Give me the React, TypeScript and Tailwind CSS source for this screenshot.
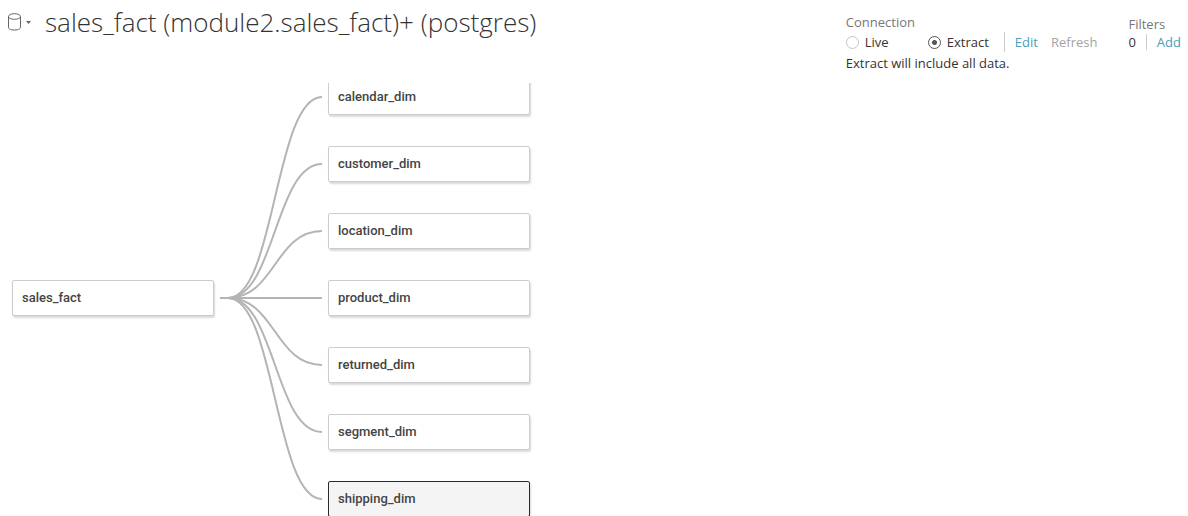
import { useState } from "react";

const ROW_STEP = 67;
const NODE_CENTER = 14;
const FACT_ROW = 3;

const dimensions = [
  "calendar_dim",
  "customer_dim",
  "location_dim",
  "product_dim",
  "returned_dim",
  "segment_dim",
  "shipping_dim",
];

function centerOf(row: number) {
  return NODE_CENTER + row * ROW_STEP;
}

function edgePath(row: number) {
  const from = centerOf(FACT_ROW);
  const to = centerOf(row);
  return `M220 ${from}H228C275 ${from} 275 ${to} 322 ${to}`;
}

type NodeProps = {
  name: string;
  left: number;
  row: number;
  selected: boolean;
  onSelect: () => void;
};

function TableNode({ name, left, row, selected, onSelect }: NodeProps) {
  const look = selected
    ? "border-[#2a2a2a] bg-[#f4f4f4]"
    : "border-[#cccccc] bg-white";
  return (
    <button
      type="button"
      onClick={onSelect}
      style={{ left, top: centerOf(row) - 18 }}
      className={`absolute flex h-9 w-[202px] items-center rounded-[2px] border pl-[9px] text-left font-[Roboto,sans-serif] text-[13px] leading-4 font-medium text-[#444444] shadow-[1px_2px_2px_rgba(0,0,0,0.15)] ${look}`}
    >
      {name}
    </button>
  );
}

function DatabaseMenu() {
  return (
    <button type="button" aria-label="Data source menu" className="flex items-center gap-[5px] text-[#666666]">
      <svg width="14" height="18" viewBox="0 0 14 18" fill="none" stroke="currentColor">
        <ellipse cx="7.5" cy="3.5" rx="6" ry="2.8" />
        <path d="M1.5 3.5V14C1.5 15.8 3 17 7.5 17S13.5 15.8 13.5 14V3.5" />
      </svg>
      <svg width="5" height="3" viewBox="0 0 5 3" fill="currentColor">
        <path d="M0 0H5L2.5 3Z" />
      </svg>
    </button>
  );
}

export default function App() {
  const [mode, setMode] = useState("extract");
  const [selected, setSelected] = useState("shipping_dim");
  const radio =
    "m-0 h-[13px] w-[13px] appearance-none rounded-full border border-[#c4c4c4] bg-white checked:border-[#555555] checked:bg-[radial-gradient(circle,#555555_2px,transparent_3px)]";

  return (
    <div className="flex h-screen flex-col overflow-hidden bg-white font-['Open_Sans','Noto_Sans',sans-serif] text-[13px] leading-5 text-[#333333]">
      <header className="flex h-[83px] shrink-0 items-start justify-between pr-[7px] pl-[7px]">
        <div className="flex items-center gap-[14px] pt-1">
          <DatabaseMenu />
          <h1 className="text-[26px] leading-9 font-light whitespace-nowrap">
            sales_fact (module2.sales_fact)+ (postgres)
          </h1>
        </div>
        <div className="flex gap-[31px] pt-3">
          <fieldset>
            <legend className="text-[#777777]">Connection</legend>
            <div className="flex items-center">
              <label className="flex w-[82px] items-center gap-[6px]">
                <input type="radio" name="mode" className={radio} checked={mode === "live"} onChange={() => setMode("live")} />
                Live
              </label>
              <label className="flex items-center gap-[6px]">
                <input type="radio" name="mode" className={radio} checked={mode === "extract"} onChange={() => setMode("extract")} />
                Extract
              </label>
              <div className="ml-[15px] flex gap-[13px] border-l border-[#cccccc] pl-[10px]">
                <button type="button" className="text-[#4a9db8]">Edit</button>
                <button type="button" className="text-[#a3a3a3]">Refresh</button>
              </div>
            </div>
            <p className="pt-px">Extract will include all data.</p>
          </fieldset>
          <section>
            <h2 className="pt-1 leading-4 text-[#777777]">Filters</h2>
            <div className="flex items-center">
              <span>0</span>
              <span className="mr-[10px] ml-[10px] h-4 w-px bg-[#cccccc]" />
              <button type="button" className="text-[#4a9db8]">Add</button>
            </div>
          </section>
        </div>
      </header>
      <main className="relative grow overflow-hidden">
        <svg className="absolute top-0 left-0" width="328" height="440" fill="none" stroke="#b4b4b4" strokeWidth="2">
          {dimensions.map((name, row) => (
            <path key={name} d={edgePath(row)} />
          ))}
        </svg>
        <TableNode
          name="sales_fact"
          left={12}
          row={FACT_ROW}
          selected={selected === "sales_fact"}
          onSelect={() => setSelected("sales_fact")}
        />
        {dimensions.map((name, row) => (
          <TableNode
            key={name}
            name={name}
            left={328}
            row={row}
            selected={selected === name}
            onSelect={() => setSelected(name)}
          />
        ))}
      </main>
    </div>
  );
}
